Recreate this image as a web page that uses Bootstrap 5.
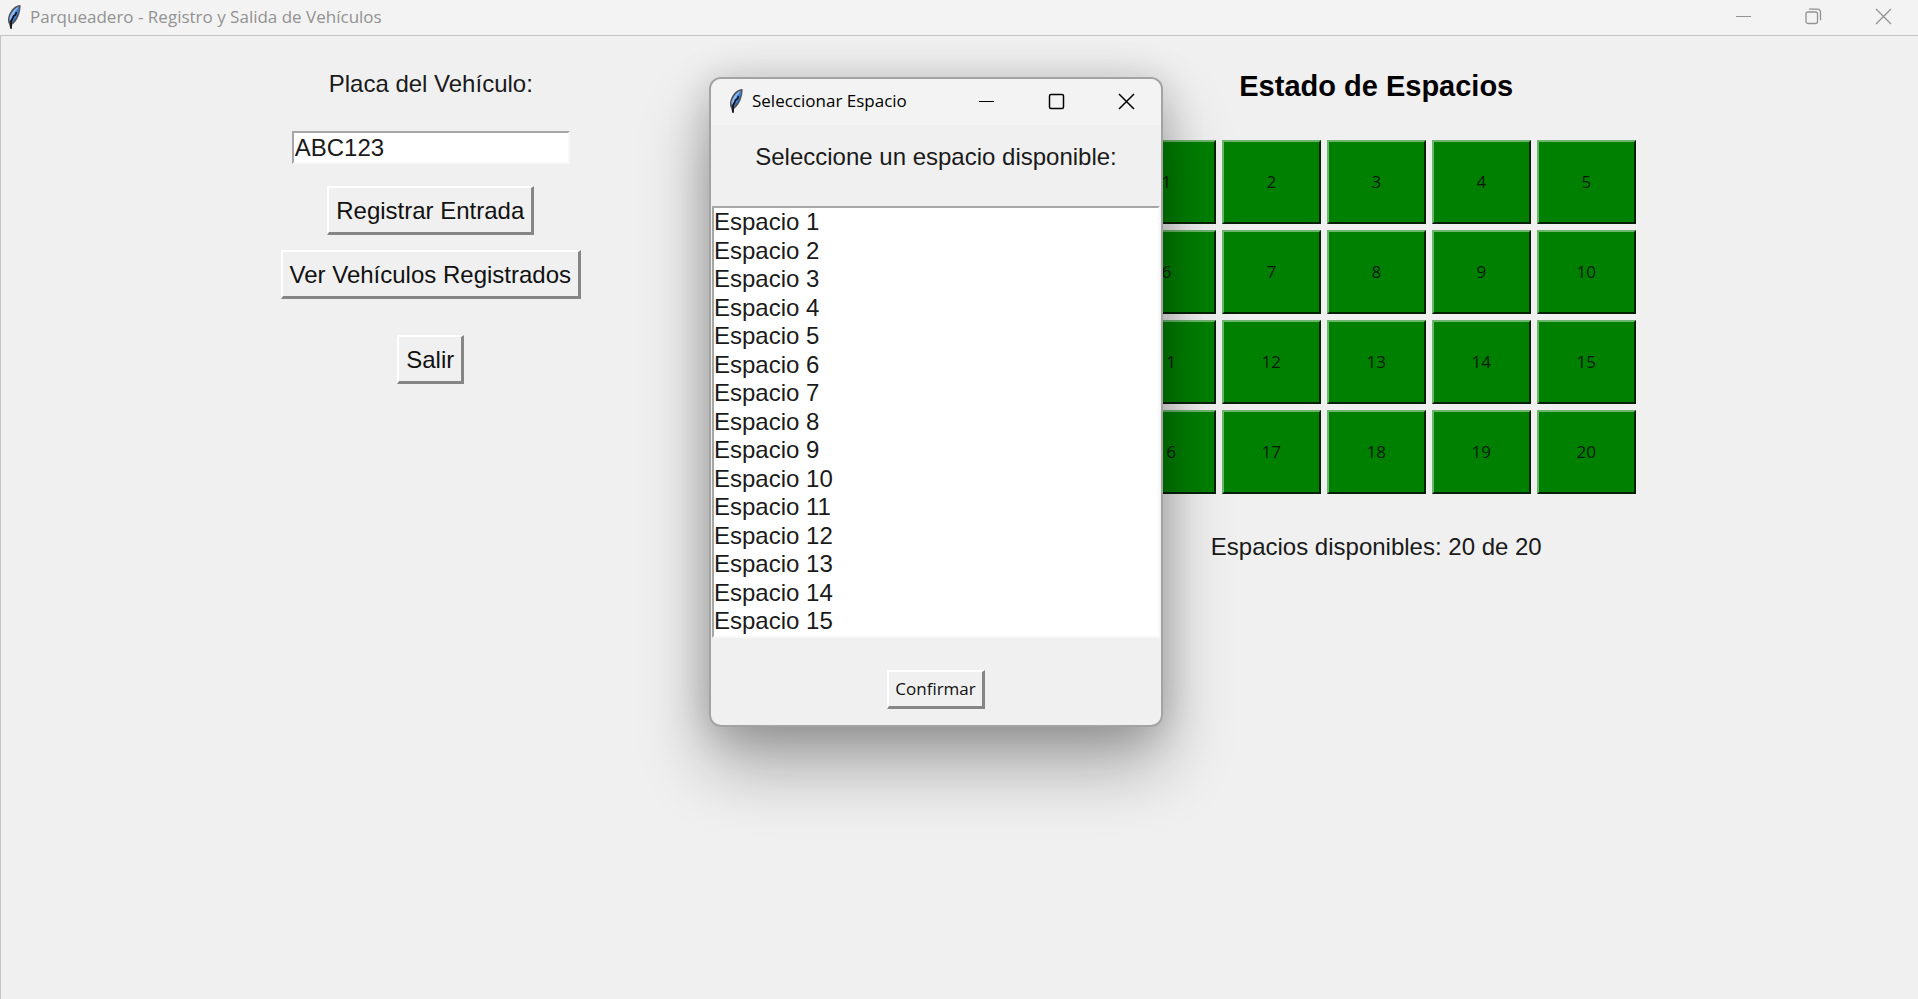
<!DOCTYPE html>
<html lang="es">
<head>
<meta charset="utf-8">
<meta name="viewport" content="width=device-width, initial-scale=1">
<title>Parqueadero - Registro y Salida de Vehículos</title>
<link href="https://cdn.jsdelivr.net/npm/bootstrap@5.3.0/dist/css/bootstrap.min.css" rel="stylesheet">
<style>
  body { background: #f0f0f0; color: #1a1a1a; font: 24px/28px "Liberation Sans", Arial, sans-serif; }
  .titlebar { background: #f3f3f3; font: 17px/24px "Open Sans", "Noto Sans", sans-serif; }
  .titlebar svg { display: block; }
  .titlebar button { border: 0; padding: 0; background: none; color: inherit; }
  .window-buttons { display: flex; gap: 53px; }
  .main-bar { height: 36px; color: #929292; border-bottom: 1px solid #c4c4c4; padding: 0 26px 2px 6px; }
  .main-area { display: grid; grid-template-columns: 5fr 6fr; padding: 0 26px 0 0; border-left: 1px solid #c4c4c4; }
  .pane { display: flex; flex-direction: column; align-items: center; }
  .controls { padding-top: 34px; }
  .state { padding-top: 33px; }
  .state h1 { font-size: 29px; line-height: 34px; font-weight: 700; color: #000; margin: 0 0 37px; }
  .entry { width: 278px; height: 33px; padding: 0 1px; margin: 33px 0 22px; background: #fff; color: #1a1a1a; border: 2px solid; border-color: #a6a6a6 #f8f8f8 #f8f8f8 #a6a6a6; border-radius: 0; }
  .raised { color: #111; background: #f0f0f0; padding: 9px 7px 7px; border: 3px solid; border-width: 2px 3px 3px 2px; border-color: #fff #868686 #868686 #fff; border-radius: 0; }
  .gap-above { margin-top: 15px; }
  .gap-above-lg { margin-top: 36px; }
  .slots { display: grid; grid-template-columns: repeat(5, 99px); grid-auto-rows: 84px; gap: 6px; margin-bottom: 39px; }
  .slot { padding: 0; background: #008000; color: #021a02; font: 17px/24px "Open Sans", "Noto Sans", sans-serif; border: 2px solid; border-color: #6db56d #062006 #062006 #6db56d; }
  .dialog-box { position: absolute; left: 709px; top: 77px; width: 454px; background: #f0f0f0; border: 2px solid #a3a3a3; border-radius: 12px; overflow: hidden; box-shadow: 0 38px 70px rgba(0,0,0,.32), 0 4px 40px rgba(0,0,0,.18); }
  .dialog-bar { height: 46px; color: #000; padding: 0 26px 2px 17px; }
  .picker { width: 448px; height: 432px; padding: 0; overflow: hidden; color: #1a1a1a; background: #fff; border: 2px solid; border-color: #a6a6a6 #f8f8f8 #f8f8f8 #a6a6a6; border-radius: 0; outline: 0; }
  .picker option { padding: 0; line-height: 28px; min-height: 0; }
  .picker option:nth-child(odd) { padding-bottom: 1px; }
  .dialog-label { margin: 18px 0 35px; }
  .confirm { font: 17px/24px "Open Sans", "Noto Sans", sans-serif; padding: 5px 6px; margin: 32px 0 16px; }
</style>
</head>
<body class="d-flex flex-column min-vh-100">
<svg width="0" height="0" class="position-absolute" aria-hidden="true">
  <symbol id="feather" viewBox="0 0 16 26">
    <path d="M14.500 1C9 1 4 6.500 2.300 13c-.6 3-.4 5 .7 7L4.500 25h1l.8-4.500C9.500 18.500 12.500 14 13.800 8c.6-2.500 1-5 .7-7z" fill="#4d535d"/>
    <path d="M13 2.500C9 4 5.500 8 3.600 13.500l-.2 4 4-6z" fill="#8abaf0"/>
    <path d="M13.400 3C13 9 10 14.500 6 18.500L5 16 9 8z" fill="#3a80d8"/>
    <path d="M10.500 8l-1 3-2 1-1 3-1.500 2.500v7" fill="none" stroke="#0c0c10" stroke-width="1.500"/>
  </symbol>
</svg>

<header class="titlebar main-bar d-flex align-items-center">
  <svg width="16" height="26" aria-hidden="true"><use href="#feather"/></svg>
  <span class="ms-2 me-auto">Parqueadero - Registro y Salida de Vehículos</span>
  <div class="window-buttons">
    <button type="button" aria-label="Minimizar"><svg width="17" height="17" stroke="currentColor"><path d="M1 8.500h15"/></svg></button>
    <button type="button" aria-label="Restaurar"><svg width="17" height="17" fill="none" stroke="currentColor" stroke-width="1.300"><rect x="1" y="4" width="11.500" height="11.500" rx="2"/><path d="M4 1.200h8.500a3 3 0 0 1 3 3v8"/></svg></button>
    <button type="button" aria-label="Cerrar"><svg width="17" height="17" stroke="currentColor" stroke-width="1.300"><path d="M1 1l15 15M16 1L1 16"/></svg></button>
  </div>
</header>

<main class="main-area flex-grow-1">
  <form class="pane controls">
    <label for="placa">Placa del Vehículo:</label>
    <input id="placa" class="entry" type="text" value="ABC123">
    <button type="button" class="raised">Registrar Entrada</button>
    <button type="button" class="raised gap-above">Ver Vehículos Registrados</button>
    <button type="button" class="raised gap-above-lg">Salir</button>
  </form>
  <section class="pane state">
    <h1>Estado de Espacios</h1>
    <div class="slots">
      <button type="button" class="slot">1</button>
      <button type="button" class="slot">2</button>
      <button type="button" class="slot">3</button>
      <button type="button" class="slot">4</button>
      <button type="button" class="slot">5</button>
      <button type="button" class="slot">6</button>
      <button type="button" class="slot">7</button>
      <button type="button" class="slot">8</button>
      <button type="button" class="slot">9</button>
      <button type="button" class="slot">10</button>
      <button type="button" class="slot">11</button>
      <button type="button" class="slot">12</button>
      <button type="button" class="slot">13</button>
      <button type="button" class="slot">14</button>
      <button type="button" class="slot">15</button>
      <button type="button" class="slot">16</button>
      <button type="button" class="slot">17</button>
      <button type="button" class="slot">18</button>
      <button type="button" class="slot">19</button>
      <button type="button" class="slot">20</button>
    </div>
    <p class="m-0">Espacios disponibles: 20 de 20</p>
  </section>
</main>

<div class="dialog-box" role="dialog" aria-labelledby="dialog-title">
  <div class="titlebar dialog-bar d-flex align-items-center">
    <svg width="16" height="26" aria-hidden="true"><use href="#feather"/></svg>
    <span id="dialog-title" class="ms-2 me-auto">Seleccionar Espacio</span>
    <div class="window-buttons">
      <button type="button" aria-label="Minimizar"><svg width="17" height="17" stroke="currentColor"><path d="M1 8.500h15"/></svg></button>
      <button type="button" aria-label="Maximizar"><svg width="17" height="17" fill="none" stroke="currentColor" stroke-width="1.500"><rect x="1.500" y="1.500" width="14" height="14" rx="1.500"/></svg></button>
      <button type="button" aria-label="Cerrar"><svg width="17" height="17" stroke="currentColor" stroke-width="1.500"><path d="M1 1l15 15M16 1L1 16"/></svg></button>
    </div>
  </div>
  <form class="pane">
    <label for="espacio" class="dialog-label">Seleccione un espacio disponible:</label>
    <select id="espacio" class="picker" size="15">
      <option>Espacio 1</option>
      <option>Espacio 2</option>
      <option>Espacio 3</option>
      <option>Espacio 4</option>
      <option>Espacio 5</option>
      <option>Espacio 6</option>
      <option>Espacio 7</option>
      <option>Espacio 8</option>
      <option>Espacio 9</option>
      <option>Espacio 10</option>
      <option>Espacio 11</option>
      <option>Espacio 12</option>
      <option>Espacio 13</option>
      <option>Espacio 14</option>
      <option>Espacio 15</option>
    </select>
    <button type="button" class="raised confirm">Confirmar</button>
  </form>
</div>
<script src="https://cdn.jsdelivr.net/npm/bootstrap@5.3.0/dist/js/bootstrap.bundle.min.js"></script>
</body>
</html>
